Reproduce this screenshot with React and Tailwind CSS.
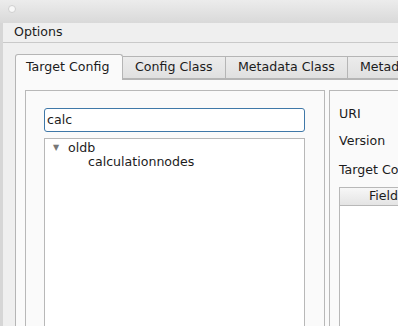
export default function App() {
    const tabs = ['Config Class', 'Metadata Class', 'Metadata'];
    return (
        <div
            className="w-[398px] h-[326px] overflow-hidden bg-[#efefef] text-[12.6px] text-[#1c1c1c]"
            style={{ fontFamily: '"DejaVu Sans", sans-serif' }}
        >
            <div className="h-[23px] bg-gradient-to-b from-[#ececec] to-[#d9d9d9] flex items-start pl-[8px] pt-[5px]">
                <div className="w-[8px] h-[8px] rounded-full bg-[#f8f8f8] border border-[#cfcfcf]" />
            </div>
            <div className="flex h-[303px]">
                <div className="w-[3px] bg-[#d6d6d6] shrink-0" />
                <div className="w-[600px] shrink-0">
                    <div className="h-[20px] border-b border-[#c9c9c9] pl-[11px] flex items-center leading-none">
                        Options
                    </div>
                    <div className="pt-[11px] pl-[12px]">
                        <div className="flex items-end h-[25px] relative z-10">
                            <div className="w-[108px] h-[26px] -mb-[1px] border border-b-0 border-[#b5b5b5] rounded-t-[3px] bg-[#fafafa] pl-[10px] flex items-center">
                                Target Config
                            </div>
                            {tabs.map((t, i) => (
                                <div
                                    key={t}
                                    className={`h-[23px] border border-l-0 border-[#b5b5b5] bg-gradient-to-b from-[#ececec] to-[#e0e0e0] flex items-center pl-[12px] ${
                                        i === 0 ? 'w-[103px]' : i === 1 ? 'w-[122px]' : 'w-[110px]'
                                    }`}
                                >
                                    {t}
                                </div>
                            ))}
                        </div>
                        <div className="border border-[#b5b5b5] bg-[#fafafa] pl-[9px] pt-[10px] h-[260px] flex gap-[4px]">
                            <div className="w-[300px] shrink-0 border border-[#b8b8b8] pl-[18px] pt-[17px]">
                                <div className="w-[261px] h-[24px] border border-[#3f78a8] rounded-[3px] bg-white flex items-center pl-[2px]">
                                    calc
                                </div>
                                <div className="mt-[6px] w-[261px] h-[200px] border border-[#b8b8b8] bg-white pt-[2px]">
                                    <div className="flex items-center h-[14px]">
                                        <span className="w-[23px] pl-[8px] text-[8px] text-[#777]">▼</span>
                                        <span>oldb</span>
                                    </div>
                                    <div className="h-[14px] flex items-center pl-[43px]">calculationnodes</div>
                                </div>
                            </div>
                            <div className="flex-1 border border-[#b8b8b8] pl-[9px]">
                                <div className="h-[46px] flex items-center">URI</div>
                                <div className="-mt-[2px] h-[12px] flex items-center">Version</div>
                                <div className="mt-[17px] h-[12px] flex items-center">Target Config</div>
                                <div className="mt-[11px] border border-[#b8b8b8] bg-white h-[200px]">
                                    <div className="h-[18px] border-b border-[#b8b8b8] bg-gradient-to-b from-[#f7f7f7] to-[#e4e4e4] pl-[29px] flex items-center">
                                        Field
                                    </div>
                                </div>
                            </div>
                        </div>
                    </div>
                </div>
            </div>
        </div>
    );
}
